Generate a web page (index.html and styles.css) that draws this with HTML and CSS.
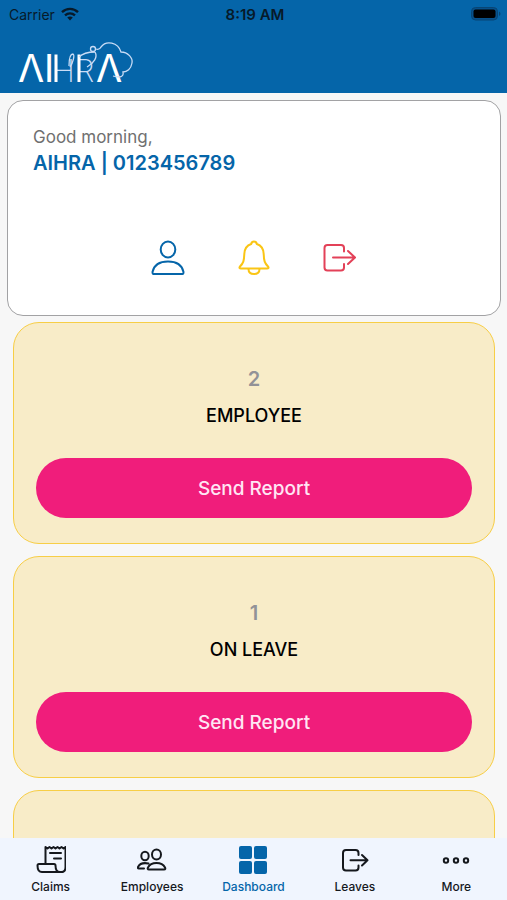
FILE: index.html
```html
<!DOCTYPE html>
<html lang="en">
<head>
<meta charset="utf-8">
<meta name="viewport" content="width=device-width, initial-scale=1">
<title>AIHRA Dashboard</title>
<link rel="stylesheet" href="styles.css">
</head>
<body>
<header class="header">
  <div class="status">
    <div class="carrier">Carrier
      <svg width="18" height="14" viewBox="0 0 18 14" aria-hidden="true"><g fill="none" stroke="currentColor" stroke-width="2.4"><path d="M1 5.2C5.6.8 12.4.8 17 5.2"/><path d="M4 8.4c3-2.7 7-2.7 10 0"/></g><path d="M9 13.4 6.2 10.6c1.6-1.4 4-1.4 5.6 0z" fill="currentColor"/></svg>
    </div>
    <div class="time">8:19 AM</div>
    <div class="power">
      <svg width="30" height="14" viewBox="0 0 30 14" aria-hidden="true"><rect x=".5" y=".5" width="26" height="12.5" rx="4" fill="#07508a" stroke="#084574"/><rect x="2.5" y="2.5" width="22" height="8.5" rx="2" fill="#000"/><path d="M28 4.5c2 1 2 3.500 0 4.500z" fill="#084574"/></svg>
    </div>
  </div>
  <svg class="logo" width="116" height="52" viewBox="0 0 116 52" role="img" aria-label="AIHRA">
    <text class="logo-text" y="45"><tspan x="-1">Λ</tspan><tspan x="25">I</tspan><tspan class="logo-thin" x="33">H</tspan><tspan class="logo-thin" x="56">R</tspan><tspan x="77">Λ</tspan></text>
    <path d="M37 17.500v27.500M60 17.500v27.500" stroke="#fff" stroke-width="3"/>
    <g fill="none" stroke="#c9dcf6" stroke-width="1.300">
      <path d="M51 30c3-4 5-12 3-13-3 0-4 6-4 12"/>
      <path d="M60 20c5-5 13-5 16-5"/>
      <path d="M76 15c3 5-1 11-8 15"/>
      <circle cx="74" cy="12" r="2.500"/>
      <path d="M77 12c3 1 4 0 5-2 5-7 17-5 20 5 7 0 12 6 11 11-1 6-5 9-9 9 1 5-3 6-10 4"/>
    </g>
  </svg>
</header>

<main class="content">
  <section class="profile">
    <p class="greeting">Good morning,</p>
    <h1 class="name">AIHRA | 0123456789</h1>
    <div class="actions">
      <button class="action blue" type="button" aria-label="Profile">
        <svg width="34" height="36" viewBox="0 0 34 36"><g class="line"><ellipse cx="17" cy="9.500" rx="7.300" ry="8"/><path d="M2.500 34C1.500 34 1.500 33 1.500 32 3 25 9 21.500 17 21.500s14 3.500 15.500 10.500c0 1 0 2-1 2z"/></g></svg>
      </button>
      <button class="action yellow" type="button" aria-label="Notifications">
        <svg width="34" height="36" viewBox="0 0 34 36"><g class="line"><path d="M17 1.500c-1.500 0-2.500 1-2.800 2.500C9.500 5.500 7.500 9 7.300 14c-.2 7-1 9-4.300 12.500-1 1.200-.5 2 1 2h26c1.500 0 2-.8 1-2C27.700 23 26.900 21 26.700 14c-.2-5-2.200-8.500-6.900-10-.3-1.500-1.300-2.500-2.800-2.500z"/><path d="M11.500 29c0 3 2.200 5 5.500 5s5.500-2 5.500-5"/></g></svg>
      </button>
      <button class="action red" type="button" aria-label="Log out">
        <svg width="34" height="36" viewBox="0 0 34 36"><g class="line"><path d="M21 11.500V8c0-2-1-3-3-3H4.500c-2 0-3 1-3 3v19.500c0 2 1 3 3 3H18c2 0 3-1 3-3V24M10 17.500h21.500M25 11 32 17.500 25 24"/></g></svg>
      </button>
    </div>
  </section>

  <section class="card">
    <p class="count">2</p>
    <h2 class="label">EMPLOYEE</h2>
    <button class="send" type="button">Send Report</button>
  </section>
  <section class="card">
    <p class="count">1</p>
    <h2 class="label">ON LEAVE</h2>
    <button class="send" type="button">Send Report</button>
  </section>
  <section class="card"></section>
</main>

<nav class="tabs">
  <a class="tab" href="#claims">
    <svg width="30" height="30" viewBox="0 0 30 30"><g class="line"><path d="M9.500 19V2l2 1.500 2-1.500 2 1.500 2-1.500 2 1.500 2-1.500 2 1.500 2-1.500 2 1.500 2-1.500v20c0 3-1.500 5-4 5H6c-3 0-4.500-3-4.500-6.500 0-1 .5-1.500 1.500-1.500h15c1 0 1.500.5 1.500 1.500 0 4 1.500 6.500 4.500 6.500M14 8h11M18 13.500h7"/></g></svg>
    <span>Claims</span>
  </a>
  <a class="tab" href="#employees">
    <svg width="30" height="30" viewBox="0 0 30 30"><g class="line"><ellipse cx="19.500" cy="9.500" rx="4.500" ry="5"/><ellipse cx="8" cy="11" rx="3.700" ry="4.200"/><path d="M12 24.500c-1.500 0-1.500-1-1-2 1.500-3 5-4.500 8.500-4.500s7 1.500 8.500 4.500c.5 1 .5 2-1 2zM11.500 18.500c-5-1-9 .5-10.500 3.500-.4 1-.2 1.500.8 1.500H7"/></g></svg>
    <span>Employees</span>
  </a>
  <a class="tab active" href="#dashboard" aria-current="page">
    <svg width="30" height="30" viewBox="0 0 30 30" fill="currentColor"><rect x="1" y="1" width="13" height="13" rx="2"/><rect x="16" y="1" width="13" height="13" rx="2"/><rect x="1" y="16" width="13" height="13" rx="2"/><rect x="16" y="16" width="13" height="13" rx="2"/></svg>
    <span>Dashboard</span>
  </a>
  <a class="tab" href="#leaves">
    <svg width="30" height="30" viewBox="0 0 30 30"><g class="line"><path d="M18.500 10V8c0-2-1-3-3-3H6C4 5 3 6 3 8v14.500c0 2 1 3 3 3h9.500c2 0 3-1 3-3v-2M10.500 15.300h17M22 10l5.500 5.300L22 20.500"/></g></svg>
    <span>Leaves</span>
  </a>
  <a class="tab" href="#more">
    <svg width="30" height="30" viewBox="0 0 30 30"><g class="line"><circle cx="5" cy="15.500" r="2.200"/><circle cx="15" cy="15.500" r="2.200"/><circle cx="25" cy="15.500" r="2.200"/></g></svg>
    <span>More</span>
  </a>
</nav>
</body>
</html>
```
FILE: styles.css
```css
* {
  box-sizing: border-box;
}

body {
  display: flex;
  flex-direction: column;
  height: 100vh;
  margin: 0;
  background: #f7f7f7;
  color: #000;
  font-family: Inter, "Liberation Sans", sans-serif;
}

p,
h1,
h2 {
  margin: 0;
}

svg {
  display: block;
}

.line {
  fill: none;
  stroke: currentColor;
  stroke-width: 2;
  stroke-linecap: round;
  stroke-linejoin: round;
}

.header {
  flex: none;
  padding-bottom: 4px;
  background: #0565a9;
}

.status {
  display: grid;
  grid-template-columns: 1fr auto 1fr;
  align-items: center;
  height: 28px;
  padding: 0 6px 0 9px;
  color: #071a2a;
  font-size: 14px;
}

.carrier {
  display: flex;
  align-items: center;
  gap: 6px;
}

.time {
  font-size: 15px;
  font-weight: 600;
}

.power {
  justify-self: end;
}

.logo {
  margin: 9px 0 0 19px;
  overflow: visible;
}

.logo-text {
  fill: #fff;
  font-family: Inter, sans-serif;
  font-size: 38px;
}

.logo-thin {
  fill: #c9dcf6;
  font-size: 31px;
  font-weight: 200;
}

.content {
  display: flex;
  flex: 1;
  flex-direction: column;
  min-height: 0;
  overflow: hidden;
  padding-top: 7px;
}

.profile {
  flex: none;
  margin: 0 6px 6px 7px;
  padding: 24px 25px 39px;
  border: 1px solid #a2a2a4;
  border-radius: 16px;
  background: #fff;
}

.greeting {
  color: #707070;
  font-size: 17px;
  line-height: 24px;
}

.name {
  color: #0565a9;
  font-size: 20px;
  font-weight: 600;
  line-height: 28px;
}

.actions {
  display: flex;
  justify-content: center;
  gap: 52px;
  margin-top: 63px;
}

.action {
  padding: 0;
  border: 0;
  background: none;
}

.blue {
  color: #0565a9;
}

.yellow {
  color: #fac515;
}

.red {
  color: #e34158;
}

.card {
  flex: none;
  min-height: 222px;
  margin: 0 12px 12px 13px;
  padding: 42px 22px 25px;
  border: 1px solid #f7ce46;
  border-radius: 26px;
  background: #f8ecc8;
  text-align: center;
}

.count {
  color: #929297;
  font-size: 20px;
  font-weight: 600;
  line-height: 28px;
}

.label {
  margin: 8px 0 27px;
  font-size: 18px;
  font-weight: 500;
  line-height: 30px;
}

.send {
  display: block;
  width: 100%;
  height: 60px;
  border: 0;
  border-radius: 30px;
  background: #f01d7b;
  color: #ffe6f4;
  font: 500 19px Inter, "Liberation Sans", sans-serif;
}

.tabs {
  display: grid;
  flex: none;
  grid-template-columns: repeat(5, 1fr);
  height: 62px;
  padding-top: 7px;
  background: #f0f5fe;
}

.tab {
  display: flex;
  flex-direction: column;
  align-items: center;
  gap: 4px;
  color: #15181d;
  font-size: 12px;
  font-weight: 500;
  line-height: 16px;
  text-decoration: none;
}

.active {
  color: #0565a9;
}
```
